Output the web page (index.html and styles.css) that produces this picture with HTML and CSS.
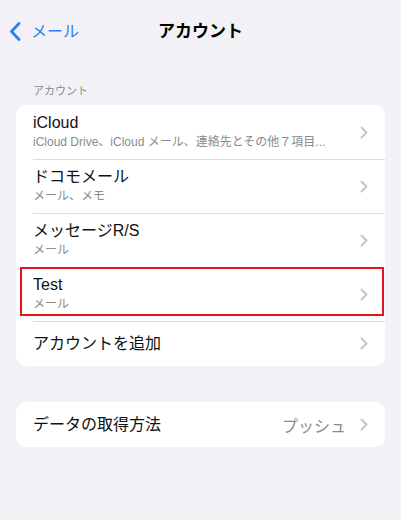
FILE: index.html
```html
<!DOCTYPE html>
<html>
<head>
    <title>アカウント</title>
    <link rel="stylesheet" href="styles.css">
</head>
<body>
    <div class="nav">
        <div class="back">
            <svg class="back-icon" width="12" height="19" viewBox="0 0 12 19">
                <polyline points="10,1.5 2.5,9.5 10,17.5" fill="none" stroke="#2f7cf6" stroke-width="2.8" stroke-linecap="round" stroke-linejoin="round"/>
            </svg>
            <span>メール</span>
        </div>
        <div class="nav-title">アカウント</div>
    </div>

    <div class="section-header">アカウント</div>

    <div class="card">
        <div class="row two-line">
            <div class="row-text">
                <div class="row-title">iCloud</div>
                <div class="row-sub">iCloud Drive、iCloud メール、連絡先とその他７項目...</div>
            </div>
            <svg class="chevron" width="8" height="13" viewBox="0 0 8 13"><polyline points="1.5,1.5 6.5,6.5 1.5,11.5" fill="none" stroke="#c4c4c7" stroke-width="1.8" stroke-linecap="round" stroke-linejoin="round"/></svg>
        </div>
        <div class="row two-line">
            <div class="row-text">
                <div class="row-title">ドコモメール</div>
                <div class="row-sub">メール、メモ</div>
            </div>
            <svg class="chevron" width="8" height="13" viewBox="0 0 8 13"><polyline points="1.5,1.5 6.5,6.5 1.5,11.5" fill="none" stroke="#c4c4c7" stroke-width="1.8" stroke-linecap="round" stroke-linejoin="round"/></svg>
        </div>
        <div class="row two-line">
            <div class="row-text">
                <div class="row-title">メッセージR/S</div>
                <div class="row-sub">メール</div>
            </div>
            <svg class="chevron" width="8" height="13" viewBox="0 0 8 13"><polyline points="1.5,1.5 6.5,6.5 1.5,11.5" fill="none" stroke="#c4c4c7" stroke-width="1.8" stroke-linecap="round" stroke-linejoin="round"/></svg>
        </div>
        <div class="row two-line highlighted">
            <div class="row-text">
                <div class="row-title">Test</div>
                <div class="row-sub">メール</div>
            </div>
            <svg class="chevron" width="8" height="13" viewBox="0 0 8 13"><polyline points="1.5,1.5 6.5,6.5 1.5,11.5" fill="none" stroke="#c4c4c7" stroke-width="1.8" stroke-linecap="round" stroke-linejoin="round"/></svg>
        </div>
        <div class="row">
            <div class="row-text">
                <div class="row-title">アカウントを追加</div>
            </div>
            <svg class="chevron" width="8" height="13" viewBox="0 0 8 13"><polyline points="1.5,1.5 6.5,6.5 1.5,11.5" fill="none" stroke="#c4c4c7" stroke-width="1.8" stroke-linecap="round" stroke-linejoin="round"/></svg>
        </div>
    </div>

    <div class="card card-fetch">
        <div class="row">
            <div class="row-text">
                <div class="row-title">データの取得方法</div>
            </div>
            <span class="row-value">プッシュ</span>
            <svg class="chevron" width="8" height="13" viewBox="0 0 8 13"><polyline points="1.5,1.5 6.5,6.5 1.5,11.5" fill="none" stroke="#c4c4c7" stroke-width="1.8" stroke-linecap="round" stroke-linejoin="round"/></svg>
        </div>
    </div>
</body>
</html>
```

FILE: styles.css
```css
body {
    font-family: "Liberation Sans", "Noto Sans CJK JP", sans-serif;
    background-color: #f2f1f6;
    color: #000000;
    margin: 0;
    padding: 0;
}

.nav {
    position: relative;
    height: 63px;
    display: flex;
    align-items: center;
    justify-content: center;
}

.back {
    position: absolute;
    left: 9px;
    top: 22px;
    display: flex;
    align-items: center;
    gap: 10px;
    color: #2f7cf6;
    font-size: 16px;
    line-height: 19px;
}

.nav-title {
    font-size: 17px;
    font-weight: bold;
    line-height: 20px;
}

.section-header {
    font-size: 11px;
    line-height: 14px;
    color: #8a8a8e;
    padding: 21px 0 0 33px;
    height: 21px;
}

.card {
    background-color: #ffffff;
    margin: 0 16px;
    border-radius: 10px;
    overflow: hidden;
}

.card-fetch {
    margin-top: 36px;
}

.row {
    position: relative;
    display: flex;
    align-items: center;
    height: 45px;
    padding: 0 17px 0 17px;
}

.row.two-line {
    height: 54px;
}

.row + .row::before {
    content: "";
    position: absolute;
    top: 0;
    left: 17px;
    right: 0;
    height: 1px;
    background-color: #dcdce0;
}

.row.highlighted::after {
    content: "";
    position: absolute;
    top: 0;
    left: 4px;
    right: 1px;
    height: 45px;
    border: 2px solid #e3141f;
}

.row-text {
    flex: 1;
    min-width: 0;
}

.row-title {
    font-size: 16px;
    line-height: 20px;
    color: #111111;
}

.row-sub {
    font-size: 12px;
    line-height: 17px;
    margin-top: 1px;
    color: #8a8a8e;
    white-space: nowrap;
}

.row-value {
    font-size: 16px;
    color: #8a8a8e;
    margin-right: 14px;
}

.chevron {
    flex-shrink: 0;
}
```
